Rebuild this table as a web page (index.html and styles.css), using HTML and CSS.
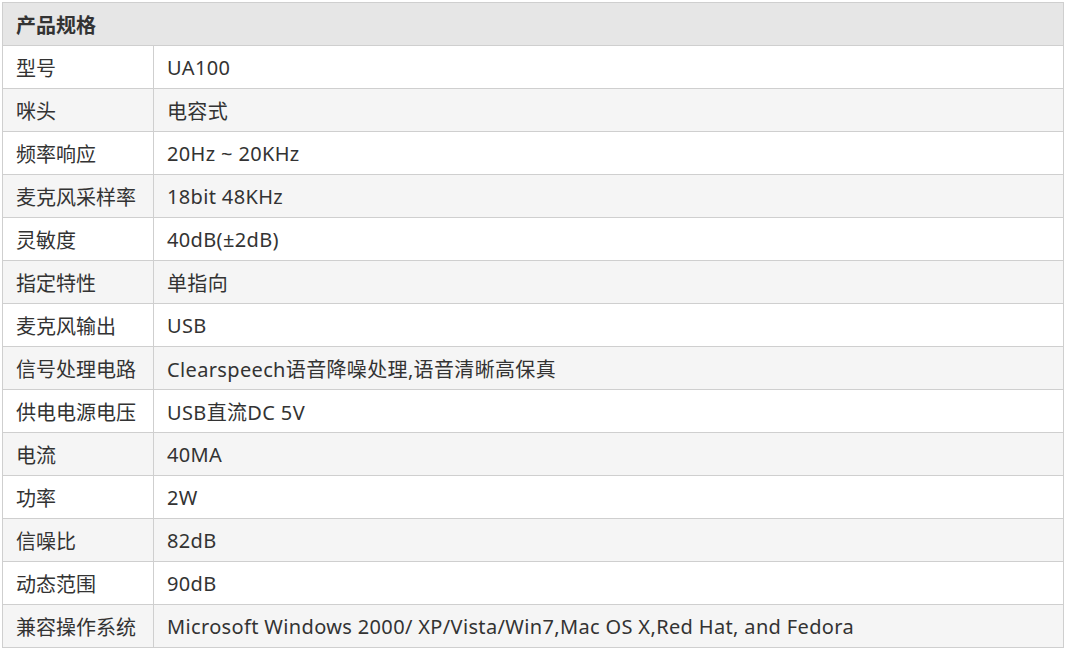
FILE: index.html
```html
<!DOCTYPE html>
<html lang="zh-CN">
<head>
<meta charset="utf-8">
<title>产品规格</title>
<link rel="stylesheet" href="styles.css">
</head>
<body>
<table class="spec">
  <colgroup>
    <col class="col-key">
    <col class="col-val">
  </colgroup>
  <thead>
    <tr><th colspan="2">产品规格</th></tr>
  </thead>
  <tbody>
    <tr><td>型号</td><td class="v">UA100</td></tr>
    <tr><td>咪头</td><td class="v">电容式</td></tr>
    <tr><td>频率响应</td><td class="v">20Hz ~ 20KHz</td></tr>
    <tr><td>麦克风采样率</td><td class="v">18bit 48KHz</td></tr>
    <tr><td>灵敏度</td><td class="v">40dB(±2dB)</td></tr>
    <tr><td>指定特性</td><td class="v">单指向</td></tr>
    <tr><td>麦克风输出</td><td class="v">USB</td></tr>
    <tr><td>信号处理电路</td><td class="v">Clearspeech语音降噪处理,语音清晰高保真</td></tr>
    <tr><td>供电电源电压</td><td class="v">USB直流DC 5V</td></tr>
    <tr><td>电流</td><td class="v">40MA</td></tr>
    <tr><td>功率</td><td class="v">2W</td></tr>
    <tr><td>信噪比</td><td class="v">82dB</td></tr>
    <tr><td>动态范围</td><td class="v">90dB</td></tr>
    <tr><td>兼容操作系统</td><td class="v">Microsoft Windows 2000/ XP/Vista/Win7,Mac OS X,Red Hat, and Fedora</td></tr>
  </tbody>
</table>
</body>
</html>
```

FILE: styles.css
```css
html, body {
  margin: 0;
  padding: 0;
  background: #ffffff;
}
body {
  padding: 2px 0 0 2px;
  font-family: "Noto Sans", "Noto Sans CJK SC", sans-serif;
  color: #333333;
}
.spec {
  border-collapse: collapse;
  width: 1062px;
  table-layout: fixed;
  font-size: 20px;
}
.col-key {
  width: 151px;
}
.spec th,
.spec td {
  border: 1px solid #cfcfcf;
  height: 43px;
  padding: 0 13px;
  text-align: left;
  vertical-align: middle;
  white-space: nowrap;
  box-sizing: border-box;
}
.spec td.v {
  letter-spacing: 0.35px;
}
.spec th {
  background: #e6e6e6;
  font-weight: bold;
  color: #333333;
}
.spec tbody tr:nth-child(even) td {
  background: #f5f5f5;
}
.spec tbody tr:nth-child(odd) td {
  background: #ffffff;
}
```
